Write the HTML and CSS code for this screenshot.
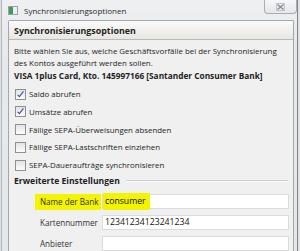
FILE: index.html
```html
<!DOCTYPE html>
<html lang="de">
<head>
    <meta charset="UTF-8">
    <title>Synchronisierungsoptionen</title>
    <link rel="stylesheet" href="styles.css">
</head>
<body>

<div class="window">
    <div class="titlebar">
        <span class="app-icon"></span>
        <span class="title">Synchronisierungsoptionen</span>
        <button class="close" type="button">
            <svg width="9" height="8" viewBox="0 0 9 8">
                <path d="M1.5 1.5 L7.5 6.5 M7.5 1.5 L1.5 6.5" stroke="#8a8f96" stroke-width="1.5"/>
                <rect x="0.5" y="0.5" width="8" height="7" fill="none" stroke="#c2c6cb"/>
            </svg>
        </button>
    </div>

    <div class="client">
        <div class="band">Synchronisierungsoptionen</div>

        <div class="content">
            <p class="intro">Bitte wählen Sie aus, welche Geschäftsvorfälle bei der Synchronisierung<br>des Kontos ausgeführt werden sollen.</p>

            <h3 class="account">VISA 1plus Card, Kto. 145997166 [Santander Consumer Bank]</h3>

            <label class="check"><span class="box on"></span>Saldo abrufen</label>
            <label class="check"><span class="box on"></span>Umsätze abrufen</label>
            <label class="check"><span class="box"></span>Fällige SEPA-Überweisungen absenden</label>
            <label class="check"><span class="box"></span>Fällige SEPA-Lastschriften einziehen</label>
            <label class="check"><span class="box"></span>SEPA-Daueraufträge synchronisieren</label>

            <div class="group">
                <span>Erweiterte Einstellungen</span>
                <span class="rule"></span>
            </div>

            <div class="field">
                <span class="label"><mark class="hl-label">Name der Bank</mark></span>
                <span class="input"><mark class="hl-value">consumer</mark></span>
            </div>
            <div class="field">
                <span class="label">Kartennummer</span>
                <span class="input">12341234123241234</span>
            </div>
            <div class="field">
                <span class="label">Anbieter</span>
                <span class="input"></span>
            </div>
        </div>
    </div>
</div>

</body>
</html>
```

FILE: styles.css
```css
body {
    margin: 0;
    padding: 0;
    font-family: 'Open Sans', 'Noto Sans', sans-serif;
    font-size: 7.9px;
    color: #1e1e1e;
    background: #dfe1e4;
    overflow: hidden;
}
.window {
    height: 251px;
    margin-left: 1px;
    margin-right: 2px;
    padding: 0 3px 0 6px;
    background: linear-gradient(to bottom, #eef0f2, #e7e9ec 40px, #e4e7ea);
    border-left: 1px solid #b3b7bc;
    border-right: 1px solid #7f8489;
}
.titlebar {
    height: 20px;
    display: flex;
    align-items: center;
}
.app-icon {
    width: 8px;
    height: 7px;
    margin: 0 6px 0 0;
    border: 1px solid #9aa3ac;
    background: linear-gradient(to right, #3e9c56 0 4px, #e9eff5 4px);
}
.title {
    font-size: 8px;
    color: #2b2b2b;
    padding-top: 1px;
}
.close {
    margin-left: auto;
    margin-right: -3px;
    align-self: flex-start;
    width: 33px;
    height: 14px;
    padding: 0;
    border: 1px solid #a8adb3;
    border-top: none;
    border-radius: 0 0 4px 4px;
    background: linear-gradient(to bottom, #f5f6f8, #e4e7eb);
    display: flex;
    align-items: center;
    justify-content: center;
}
.client {
    height: 231px;
    background: #f0f0f0;
    border: 1px solid #a3a7ac;
    border-bottom: none;
    border-radius: 2px 2px 0 0;
}
.band {
    height: 18px;
    padding-left: 5px;
    font-size: 8.9px;
    font-weight: bold;
    line-height: 19px;
    background: linear-gradient(to bottom, #fbfbfb, #e8e6e2);
    border-bottom: 1px solid #bcbab5;
}
.content {
    padding: 5px 2px 0 5px;
}
.intro {
    margin: 0;
    line-height: 12px;
    white-space: nowrap;
}
.account {
    margin: 1px 0 3px;
    font-size: 8.3px;
    font-weight: bold;
    line-height: 12px;
    white-space: nowrap;
}
.check {
    display: flex;
    align-items: center;
    height: 18px;
}
.check + .check {
    margin-top: -0.25px;
}
.box {
    width: 9px;
    height: 9px;
    margin: 0 3px 0 1px;
    border: 1px solid #8e8f8f;
    background: linear-gradient(to bottom, #e3e3e3, #fcfcfc);
    position: relative;
}
.box.on::after {
    content: "";
    position: absolute;
    left: 3px;
    top: 0;
    width: 2px;
    height: 6px;
    border: solid #2d4b9c;
    border-width: 0 1.5px 1.5px 0;
    transform: rotate(38deg);
}
.group {
    display: flex;
    align-items: center;
    height: 14px;
    font-size: 8.6px;
    font-weight: bold;
}
.rule {
    flex: 1;
    height: 0;
    margin: 0 3px 0 6px;
    border-top: 1px solid #d0d0d0;
    border-bottom: 1px solid #fafafa;
}
.field {
    display: flex;
    align-items: center;
    margin-top: 6px;
    height: 15px;
}
.field:first-of-type {
    margin-top: 8px;
}
.label {
    width: 88px;
    padding-left: 26px;
    box-sizing: border-box;
    flex-shrink: 0;
    white-space: nowrap;
    font-size: 8.1px;
    color: #333;
}
.input {
    flex: 1;
    height: 13px;
    margin-right: 2px;
    padding-left: 2px;
    background: #fff;
    border: 1px solid #dadbdd;
    font-size: 8.7px;
    line-height: 13px;
    color: #111;
}
mark {
    background: #f4f400;
    color: inherit;
}
.hl-label {
    padding: 2px 2px 3px 5px;
    margin-left: -5px;
}
.hl-value {
    padding: 2px 4px 3px 2px;
    margin-left: -2px;
}
```
